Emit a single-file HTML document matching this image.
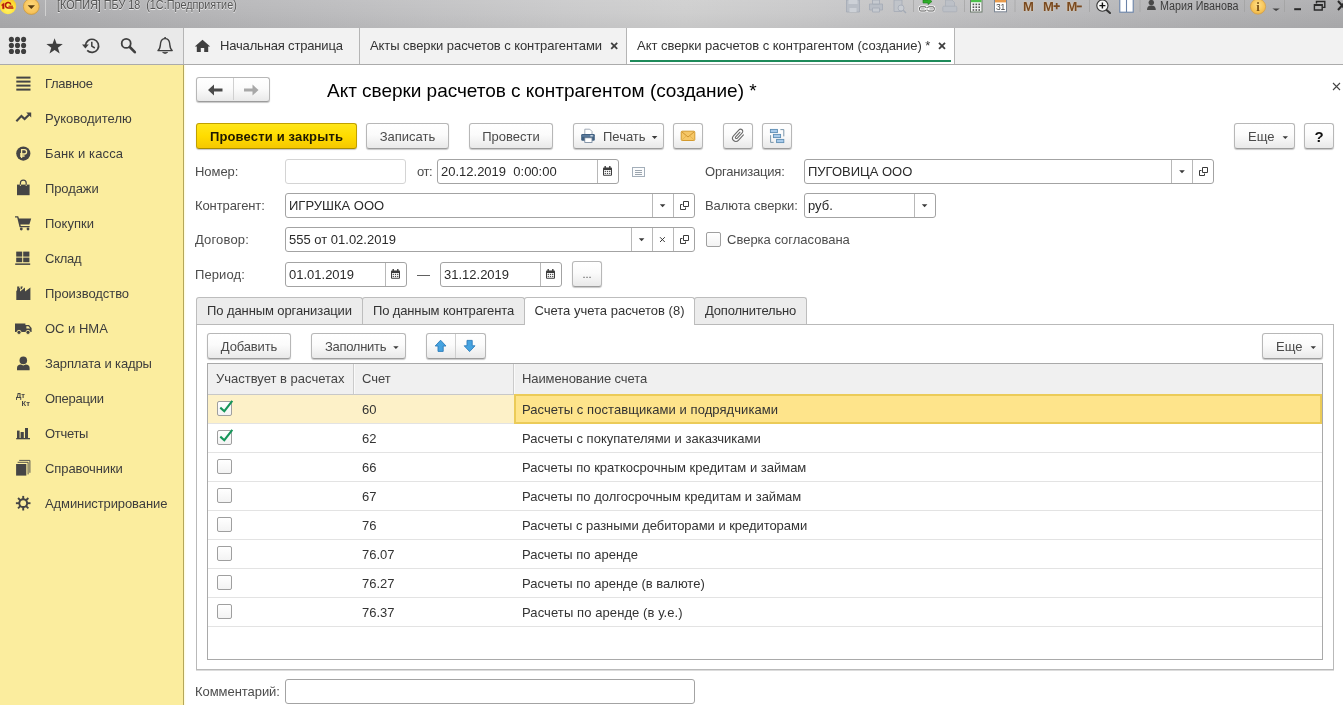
<!DOCTYPE html>
<html lang="ru">
<head>
<meta charset="utf-8">
<title>Акт сверки расчетов с контрагентом</title>
<style>
*{box-sizing:border-box;margin:0;padding:0}
html,body{width:1343px;height:705px;overflow:hidden;background:#fff}
body{font-family:"Liberation Sans",sans-serif;font-size:13px;color:#333;position:relative}
.abs{position:absolute}
#w{position:absolute;left:0;top:0;width:1343px;height:705px;overflow:hidden;will-change:transform;background:#fff}
#titlebar{position:absolute;left:0;top:0;width:1343px;height:28px;background:linear-gradient(rgba(255,255,255,.08) 0,rgba(255,255,255,.02) 45%,rgba(0,0,0,.02) 80%,rgba(0,0,0,.035) 100%),linear-gradient(90deg,#aaaaac 0,#b1b1b3 10%,#bbbbbd 25%,#c9c9ca 42%,#cecece 51%,#c8c8c9 60%,#bcbcbe 75%,#b1b1b3 90%,#acacae 100%)}
#titlebar .ttl{position:absolute;left:57px;top:-4.5px;font-size:12px;line-height:18px;color:#555;text-shadow:0 1px 0 rgba(255,255,255,.65),0 0 2px rgba(255,255,255,.6);white-space:nowrap;transform:scaleX(.899);transform-origin:0 0}
#titlebar .usr{position:absolute;left:1160px;top:-3px;font-size:12px;line-height:18px;color:#3c3c3c;white-space:nowrap;transform:scaleX(.895);transform-origin:0 0}
#toolbar{position:absolute;left:0;top:28px;width:1343px;height:37px;background:#f2f2f2;border-bottom:1px solid #ababab}
#toolbar .left{position:absolute;left:0;top:0;width:183px;height:36px;background:#e9e9e9}
#toolbar .vsep{position:absolute;top:0;width:1px;height:36px;background:#b5b5b5}
.tab{position:absolute;top:0;height:36px;font-size:13px;line-height:36px;color:#333;white-space:nowrap}
#sidebar{position:absolute;left:0;top:65px;width:183px;height:640px;background:#fbed9e}
#sidebar .it{position:absolute;left:45px;font-size:13px;line-height:20px;color:#3d3d3d;white-space:nowrap;letter-spacing:-0.18px}
#sideline{position:absolute;left:183px;top:65px;width:1px;height:640px;background:#b5a75a}
#sideline2{position:absolute;left:184px;top:65px;width:2px;height:640px;background:linear-gradient(90deg,#fffbd8,#fff)}
.btn{position:absolute;height:26px;border:1px solid #b7b7b7;border-bottom-color:#9c9c9c;border-radius:3px;background:linear-gradient(#fff 0,#fbfbfb 45%,#e9e9e9 100%);box-shadow:0 1px 1px rgba(0,0,0,.22);font-size:13px;line-height:25px;color:#4a4a4a;text-align:center;white-space:nowrap}
.btn.y{background:linear-gradient(#ffe61a 0,#ffdc00 50%,#f5c800 100%);border-color:#c0a000;border-bottom-color:#a88c00;color:#1f1a00;font-weight:bold;letter-spacing:0.16px}
.lbl{position:absolute;font-size:13px;line-height:20px;color:#4c4c4c;white-space:nowrap}
.inp{position:absolute;height:25px;border:1px solid #a3a3a3;border-radius:3px;background:#fff;font-size:13px;line-height:24px;color:#2a2a2a;padding-left:3px;white-space:nowrap;overflow:hidden}
.inp .sec{position:absolute;top:0;height:23px;border-left:1px solid #b8b8b8}
.ftab{position:absolute;top:297px;height:27px;border:1px solid #bdbdbd;border-bottom:none;border-radius:3px 3px 0 0;background:#ececec;font-size:13px;line-height:26px;color:#333;text-align:center;white-space:nowrap}
.ftab.act{background:#fff;height:28px}
.row{position:absolute;left:208px;width:1114px;height:29px;border-bottom:1px solid #e3e3e3}
.cell{position:absolute;top:0;font-size:13px;line-height:30px;color:#333;white-space:nowrap}
.cb{position:absolute;width:15px;height:15px;border:1px solid #9f9f9f;border-radius:2px;background:linear-gradient(#fff,#f3f3f3)}
</style>
</head>
<body>
<div id="w">

<!-- TITLE BAR -->
<div id="titlebar">
  <svg class="abs" style="left:0;top:0" width="1343" height="28" viewBox="0 0 1343 28">
    <defs>
      <radialGradient id="g1c" cx="50%" cy="70%" r="70%"><stop offset="0" stop-color="#fff36a"/><stop offset="0.6" stop-color="#ffe23a"/><stop offset="1" stop-color="#f2c028"/></radialGradient>
      <radialGradient id="gdd" cx="50%" cy="40%" r="70%"><stop offset="0" stop-color="#ffd97a"/><stop offset="0.7" stop-color="#f7c35a"/><stop offset="1" stop-color="#d9a23a"/></radialGradient>
      <radialGradient id="ginf" cx="50%" cy="40%" r="70%"><stop offset="0" stop-color="#ffe08a"/><stop offset="0.7" stop-color="#f5c050"/><stop offset="1" stop-color="#d8a040"/></radialGradient>
    </defs>
    <!-- 1C logo -->
    <circle cx="8" cy="6" r="8.2" fill="url(#g1c)"/>
    <path d="M1.8 4.5 L4.1 2.9 V8.8 H2.5 V5.5 L1.8 5.9 Z" fill="#b81a0c" stroke="#b81a0c" stroke-width="0.4"/>
    <path d="M10.9 4.6 A2.75 2.75 0 1 0 8.3 8 H13.4" fill="none" stroke="#b81a0c" stroke-width="1.5"/>
    <path d="M8.5 6.2 H12.9" fill="none" stroke="#b81a0c" stroke-width="1.1"/>
    <!-- dropdown -->
    <circle cx="31.3" cy="6.6" r="7.9" fill="url(#gdd)" stroke="#c99a45" stroke-width="0.8"/>
    <path d="M27.6 5.2 H35 L31.3 9 Z" fill="#5a3c10"/>
    <path d="M45.5 0 V16" stroke="#d0d0d0" stroke-width="1"/>
    <!-- disabled save/print/preview -->
    <g fill="#b9bec6" stroke="#a3aab5" stroke-width="0.8">
      <path d="M846.5 0 H859.5 V12 H846.5 Z"/>
      <path d="M869.5 4 H882.5 V10 H869.5 Z"/>
      <path d="M872.5 0 H879.5 V4 H872.5 Z M872.5 8 H879.5 V12 H872.5 Z" fill="#c6cad0"/>
      <path d="M894 0 H902 V11.5 H894 Z" fill="#c0c4ca"/>
      <circle cx="901" cy="8" r="3" fill="#c9cdd3"/>
      <path d="M903.2 10.2 L906 13" stroke-width="1.4"/>
    </g>
    <path d="M848.5 0 H857.5 V4 H848.5 Z M849.5 8 H856.5 V12 H849.5 Z" fill="#cdd1d7"/>
    <path d="M913.5 0 V12" stroke="#9d9d9d" stroke-width="1" opacity=".6"/>
    <!-- link icon -->
    <path d="M923 0 H928 V-2 L932 1.5 L928 4.6 V3 H923 Z" fill="#2fae2a" stroke="#1a7a18" stroke-width="0.6"/>
    <rect x="919.6" y="6.8" width="6.6" height="4.2" rx="1.2" fill="none" stroke="#fff" stroke-width="2.4"/>
    <rect x="927.6" y="6.8" width="6.6" height="4.2" rx="1.2" fill="none" stroke="#fff" stroke-width="2.4"/>
    <rect x="919.6" y="6.8" width="6.6" height="4.2" rx="1.2" fill="none" stroke="#555" stroke-width="1"/>
    <rect x="927.6" y="6.8" width="6.6" height="4.2" rx="1.2" fill="none" stroke="#555" stroke-width="1"/>
    <path d="M924.5 8.9 H929.5" stroke="#fff" stroke-width="1.4"/>
    <!-- disabled -->
    <g fill="#bcc0c7" stroke="#a9afb8" stroke-width="0.8">
      <path d="M945.5 0 H952 L954.5 2.5 V7 H945.5 Z"/>
      <rect x="942.8" y="6.2" width="14" height="5.6" rx="1"/>
    </g>
    <path d="M964.5 0 V12" stroke="#9d9d9d" stroke-width="1" opacity=".6"/>
    <!-- calculator -->
    <rect x="970.5" y="-1" width="11.5" height="13" fill="#f4f4f4" stroke="#6d7a6d" stroke-width="1"/>
    <rect x="971" y="-1" width="10.5" height="3.2" fill="#4cc04a"/>
    <g fill="#555"><rect x="972.6" y="3.6" width="1.6" height="1.6"/><rect x="975.5" y="3.6" width="1.6" height="1.6"/><rect x="978.4" y="3.6" width="1.6" height="1.6"/><rect x="972.6" y="6.4" width="1.6" height="1.6"/><rect x="975.5" y="6.4" width="1.6" height="1.6"/><rect x="978.4" y="6.4" width="1.6" height="1.6"/><rect x="972.6" y="9.2" width="1.6" height="1.6"/><rect x="975.5" y="9.2" width="1.6" height="1.6"/><rect x="978.4" y="9.2" width="1.6" height="1.6"/></g>
    <!-- calendar -->
    <rect x="994.5" y="-1" width="12" height="12.8" fill="#fff" stroke="#7c8794" stroke-width="1"/>
    <rect x="995" y="-1" width="11" height="3.4" fill="#e89a4a"/>
    <text x="1000.5" y="10.3" font-family="Liberation Sans" font-size="8.5" fill="#444" text-anchor="middle" letter-spacing="-0.3">31</text>
    <path d="M1015 0 V12" stroke="#9d9d9d" stroke-width="1" opacity=".6"/>
    <!-- M M+ M- -->
    <g font-family="Liberation Sans" font-weight="bold" font-size="13" fill="#7a4a20" style="text-shadow:0 0 2px #e6cfae">
      <text x="1023" y="10.6">M</text>
      <text x="1043" y="10.6">M</text>
      <text x="1066.4" y="10.6">M</text>
    </g>
    <path d="M1053.6 6.2 H1059.8 M1056.7 3.1 V9.3" stroke="#7a4a20" stroke-width="1.7"/>
    <path d="M1076.6 6.4 H1081.8" stroke="#7a4a20" stroke-width="1.8"/>
    <path d="M1089.5 0 V12" stroke="#9d9d9d" stroke-width="1" opacity=".6"/>
    <!-- zoom -->
    <path d="M1106 9.6 L1110 13" stroke="#333" stroke-width="2" stroke-linecap="round"/>
    <circle cx="1102.4" cy="5.6" r="5.6" fill="#f6f6f6" stroke="#333" stroke-width="1.1"/>
    <path d="M1099.4 5.6 H1105.4 M1102.4 2.6 V8.6" stroke="#111" stroke-width="1.4"/>
    <!-- panels -->
    <rect x="1119.8" y="-1" width="13.4" height="13.2" fill="#fff" stroke="#6a83a8" stroke-width="1.1"/>
    <path d="M1126.5 0 V12" stroke="#6a83a8" stroke-width="1.1"/>
    <path d="M1140 0 V12" stroke="#9d9d9d" stroke-width="1" opacity=".6"/>
    <!-- user -->
    <circle cx="1151.3" cy="2.6" r="2.7" fill="#4a4a4a"/>
    <path d="M1147 10 Q1147 5.6 1151.3 5.6 Q1155.8 5.6 1155.8 10 Z" fill="#4a4a4a"/>
    <path d="M1244.5 0 V12" stroke="#9d9d9d" stroke-width="1" opacity=".6"/>
    <!-- info -->
    <circle cx="1258" cy="6.6" r="7.6" fill="url(#ginf)" stroke="#d0a050" stroke-width="0.8"/>
    <text x="1258" y="11" font-family="Liberation Serif" font-weight="bold" font-size="12.5" fill="#7a5216" text-anchor="middle">i</text>
    <path d="M1272.4 8.4 H1279.8 L1276.1 11 Z" fill="#444"/>
    <path d="M1284.5 0 V12" stroke="#9d9d9d" stroke-width="1" opacity=".6"/>
    <!-- window buttons -->
    <path d="M1294.2 9.2 H1301" stroke="#2a2a2a" stroke-width="2"/>
    <path d="M1316.5 3.6 V1.5 H1324.8 V7.4 H1322.5" stroke="#2a2a2a" stroke-width="1.4" fill="none"/>
    <path d="M1314.4 4.6 H1322.2 V10 H1314.4 Z" stroke="#2a2a2a" stroke-width="1.4" fill="none"/>
    <path d="M1314.4 5 H1322.2" stroke="#2a2a2a" stroke-width="2"/>
    <path d="M1338 1 L1346 10 M1346 1 L1338 10" stroke="#2a2a2a" stroke-width="2"/>
  </svg>
  <div class="ttl">[КОПИЯ] ПБУ 18&nbsp; (1С:Предприятие)</div>
  <div class="usr">Мария Иванова</div>
</div>

<!-- TOOLBAR / TABS -->
<div id="toolbar">
  <div class="left"></div>
  <div class="abs" style="left:627px;top:0;width:327px;height:36px;background:#fff"></div>
  <div class="abs" style="left:630px;top:32px;width:321px;height:2px;background:#1e8a5a"></div>
  <div class="vsep" style="left:183px"></div>
  <div class="tab" style="left:220px;letter-spacing:-0.17px">Начальная страница</div>
  <div class="vsep" style="left:359px"></div>
  <div class="tab" style="left:370px;letter-spacing:-0.07px">Акты сверки расчетов с контрагентами</div>
  <div class="vsep" style="left:626px"></div>
  <div class="tab" style="left:637px;letter-spacing:-0.03px">Акт сверки расчетов с контрагентом (создание) *</div>
  <div class="vsep" style="left:954px"></div>
  <svg class="abs" style="left:0;top:0" width="1343" height="36" viewBox="0 28 1343 36">
    <!-- grid 3x3 -->
    <g fill="#3f3f3f">
      <circle cx="11.4" cy="39.4" r="2.55"/><circle cx="17.5" cy="39.4" r="2.55"/><circle cx="23.6" cy="39.4" r="2.55"/>
      <circle cx="11.4" cy="45.4" r="2.55"/><circle cx="17.5" cy="45.4" r="2.55"/><circle cx="23.6" cy="45.4" r="2.55"/>
      <circle cx="11.4" cy="51.4" r="2.55"/><circle cx="17.5" cy="51.4" r="2.55"/><circle cx="23.6" cy="51.4" r="2.55"/>
    </g>
    <!-- star -->
    <path d="M54.6 38.2 L56.6 43.8 L62.8 44 L57.9 47.7 L59.7 53.6 L54.6 50.1 L49.5 53.6 L51.3 47.7 L46.4 44 L52.6 43.8 Z" fill="#3f3f3f"/>
    <!-- history -->
    <path d="M85.4 45.6 A6.6 6.6 0 1 1 87.2 50.4" fill="none" stroke="#3f3f3f" stroke-width="1.7"/>
    <path d="M82 44.6 H88.8 L85.4 48.4 Z" fill="#3f3f3f"/>
    <path d="M91.8 41.8 V46.2 L94.8 48" fill="none" stroke="#3f3f3f" stroke-width="1.5"/>
    <!-- search -->
    <circle cx="126.2" cy="43.4" r="4.5" fill="none" stroke="#3f3f3f" stroke-width="1.8"/>
    <path d="M129.8 47 L134.8 52.2" stroke="#3f3f3f" stroke-width="2.6" stroke-linecap="round"/>
    <!-- bell -->
    <path d="M158 50.6 H172.2 C169.6 48.6 170 45.4 169.6 43 C169.2 40.4 167.4 38.6 165.1 38.6 C162.8 38.6 161 40.4 160.6 43 C160.2 45.4 160.6 48.6 158 50.6 Z" fill="none" stroke="#3f3f3f" stroke-width="1.4" stroke-linejoin="round"/>
    <path d="M165.1 37 V38.6" stroke="#3f3f3f" stroke-width="1.6"/>
    <path d="M162.6 52.4 H167.6 Q165.1 54.6 162.6 52.4 Z" fill="#3f3f3f" stroke="#3f3f3f" stroke-width="0.8"/>
    <!-- home -->
    <path d="M202.5 39.8 L210.2 46.6 H208.2 V52 H204.2 V48 H200.8 V52 H196.8 V46.6 H194.8 Z" fill="#3f3f3f"/>
    <!-- tab close x -->
    <path d="M611.2 42.8 L617.2 48.8 M617.2 42.8 L611.2 48.8" stroke="#3f3f3f" stroke-width="1.8"/>
    <path d="M939 42.8 L945 48.8 M945 42.8 L939 48.8" stroke="#3f3f3f" stroke-width="1.8"/>
  </svg>
</div>

<!-- SIDEBAR -->
<div id="sidebar">
  <svg class="abs" style="left:0;top:0" width="183" height="640" viewBox="0 65 183 640">
    <g fill="#454545" stroke="none">
      <!-- menu -->
      <rect x="16.3" y="76.6" width="14.2" height="2"/><rect x="16.3" y="80.6" width="14.2" height="2"/><rect x="16.3" y="84.6" width="14.2" height="2"/><rect x="16.3" y="88.6" width="14.2" height="2"/>
      <!-- trend -->
      <path d="M15.6 120.6 L21.4 114.6 L24.6 117.6 L28 114.3 L26.2 112.6 H31.2 V117.6 L29.5 115.8 L24.6 120.6 L21.4 117.6 L17.1 122.1 Z"/>
      <!-- ruble -->
      <circle cx="23.3" cy="153.6" r="7.1"/>
      <!-- bag -->
      <path d="M17 184.6 H29.6 V195.2 H17 Z"/>
      <!-- cart -->
      <path d="M15 216.2 H18.2 L19 218.6 H31.2 L29.4 224.6 H20.4 L20.8 226 H29.6 V227.2 H19.6 L17.2 217.6 H15 Z"/>
      <circle cx="21.3" cy="229" r="1.4"/><circle cx="28" cy="229" r="1.4"/>
      <!-- sklad -->
      <rect x="16.2" y="251.6" width="6" height="5"/><rect x="23.2" y="251.6" width="6.2" height="5"/>
      <rect x="16.2" y="257.6" width="6" height="4.6"/><rect x="23.2" y="257.6" width="6.2" height="4.6"/>
      <rect x="15.2" y="263.4" width="15" height="1.5"/>
      <!-- factory -->
      <path d="M16.3 300 V291 L20 287.6 V291.6 L25 287.6 V291.6 L30.4 287.6 V300 Z"/>
      <path d="M17.2 286.4 H19.4 L18.6 290 L17.2 291.2 Z"/><path d="M20.6 286.4 H22.8 L22 288.6 L20.6 289.8 Z"/>
      <!-- truck -->
      <path d="M15 323.4 H25.4 V325 H29 L31.6 328 V332 H15 Z"/>
      <circle cx="19" cy="332.4" r="2.1" stroke="#fbed9e" stroke-width="0.9"/><circle cx="28" cy="332.4" r="2.1" stroke="#fbed9e" stroke-width="0.9"/>
      <!-- person -->
      <circle cx="23.3" cy="360.4" r="3.8"/>
      <path d="M17 370.2 V368 Q17 364.6 21 364.4 L23.3 365.6 L25.6 364.4 Q29.6 364.6 29.6 368 V370.2 Z"/>
      <!-- reports -->
      <rect x="17" y="430.6" width="2.6" height="7.6"/><rect x="20.6" y="432" width="3.2" height="6.2"/><rect x="25" y="428" width="3" height="10.2"/>
      <rect x="16.2" y="438" width="13.8" height="1.3"/>
      <!-- catalogs -->
      <rect x="16.1" y="464" width="10.2" height="11.6"/>
    </g>
    <path d="M27.6 111.6 l0 0" />
    <!-- ruble glyph -->
    <path d="M21.6 158 V149.6 H24.4 A2.2 2.2 0 0 1 24.4 154 H20 M20 156 H24.6" fill="none" stroke="#fbed9e" stroke-width="1.3"/>
    <!-- bag handle -->
    <path d="M20.4 186.4 V183 A2.9 2.9 0 0 1 26.2 183 V186.4" fill="none" stroke="#454545" stroke-width="1.2"/>
    <path d="M20.4 186 V184.6 M26.2 186 V184.6" stroke="#fbed9e" stroke-width="0.9"/>
    <!-- truck window -->
    <path d="M26.4 326.2 H28.4 L30.2 328.4 H26.4 Z" fill="#fbed9e"/>
    <!-- DtKt -->
    <text x="16" y="398.4" font-family="Liberation Sans" font-weight="bold" font-size="7.5" fill="#454545">Дт</text>
    <text x="21.6" y="405.8" font-family="Liberation Sans" font-weight="bold" font-size="7.5" fill="#454545">Кт</text>
    <!-- catalogs back pages -->
    <path d="M17.6 462.3 H28.1 V474.4 M19.2 460.4 H29.9 V472.8" fill="none" stroke="#454545" stroke-width="0.9"/>
    <!-- gear -->
    <g transform="translate(23.2 503.2)">
      <g fill="#454545">
        <rect x="-0.95" y="-7.3" width="1.9" height="14.6"/>
        <rect x="-0.95" y="-7.3" width="1.9" height="14.6" transform="rotate(45)"/>
        <rect x="-0.95" y="-7.3" width="1.9" height="14.6" transform="rotate(90)"/>
        <rect x="-0.95" y="-7.3" width="1.9" height="14.6" transform="rotate(135)"/>
        <circle r="4.9"/>
      </g>
      <circle r="2.9" fill="#fbed9e"/>
    </g>
  </svg>
  <div class="it" style="top:9px;letter-spacing:-0.27px">Главное</div>
  <div class="it" style="top:44px;letter-spacing:0px">Руководителю</div>
  <div class="it" style="top:79px;letter-spacing:0.14px">Банк и касса</div>
  <div class="it" style="top:114px;letter-spacing:-0.1px">Продажи</div>
  <div class="it" style="top:149px;letter-spacing:0px">Покупки</div>
  <div class="it" style="top:184px;letter-spacing:-0.24px">Склад</div>
  <div class="it" style="top:219px;letter-spacing:-0.06px">Производство</div>
  <div class="it" style="top:254px;letter-spacing:0px">ОС и НМА</div>
  <div class="it" style="top:289px;letter-spacing:-0.12px">Зарплата и кадры</div>
  <div class="it" style="top:324px;letter-spacing:-0.27px">Операции</div>
  <div class="it" style="top:359px;letter-spacing:-0.3px">Отчеты</div>
  <div class="it" style="top:394px;letter-spacing:-0.09px">Справочники</div>
  <div class="it" style="top:429px;letter-spacing:-0.1px">Администрирование</div>
</div>
<div id="sideline"></div>
<div id="sideline2"></div>

<!-- MAIN -->
<div id="main">
<!-- form header -->
<div class="btn" style="left:196px;top:77px;width:74px;height:25px"></div>
<div class="abs" style="left:233px;top:78px;width:1px;height:22px;background:#d0d0d0"></div>
<svg class="abs" style="left:208px;top:84px" width="15" height="12" viewBox="0 0 15 12"><path d="M0 6 L6 0.5 V4.5 H14.5 V7.5 H6 V11.5 Z" fill="#4a4a4a"/></svg>
<svg class="abs" style="left:244px;top:84px" width="15" height="12" viewBox="0 0 15 12"><path d="M14.5 6 L8.5 0.5 V4.5 H0 V7.5 H8.5 V11.5 Z" fill="#a8a8a8"/></svg>
<div class="abs" id="ftitle" style="left:327px;top:79px;font-size:19px;line-height:24px;color:#000;letter-spacing:-0.025px;white-space:nowrap">Акт сверки расчетов с контрагентом (создание) *</div>
<svg class="abs" style="left:1332px;top:82px" width="9" height="9" viewBox="0 0 9 9"><path d="M1 1 L8 8 M8 1 L1 8" stroke="#444" stroke-width="1.1" fill="none"/></svg>

<!-- command bar -->
<div class="btn y" style="left:196px;top:123px;width:161px">Провести и закрыть</div>
<div class="btn" style="left:366px;top:123px;width:83px">Записать</div>
<div class="btn" style="left:469px;top:123px;width:84px">Провести</div>
<div class="btn" style="left:573px;top:123px;width:91px"><span class="abs" style="left:29px;top:0">Печать</span></div>
<div class="btn" style="left:673px;top:123px;width:30px"></div>
<div class="btn" style="left:723px;top:123px;width:30px"></div>
<div class="btn" style="left:762px;top:123px;width:30px"></div>
<div class="btn" style="left:1234px;top:123px;width:61px"><span class="abs" style="left:13px;top:0">Еще</span></div>
<div class="btn" style="left:1304px;top:123px;width:30px;font-weight:bold;color:#111;font-size:15px">?</div>

<!-- fields -->
<div class="lbl" style="left:195px;top:162px;letter-spacing:-0.05px">Номер:</div>
<div class="inp" style="left:285px;top:159px;width:121px;border-color:#d4d4d4"></div>
<div class="lbl" style="left:417px;top:162px;letter-spacing:-0.5px">от:</div>
<div class="inp" style="left:437px;top:159px;width:182px">20.12.2019&nbsp; 0:00:00<div class="sec" style="left:159px;width:21px"></div></div>
<div class="lbl" style="left:705px;top:162px;letter-spacing:-0.2px">Организация:</div>
<div class="inp" style="left:804px;top:159px;width:410px">ПУГОВИЦА ООО<div class="sec" style="left:366px;width:21px"></div><div class="sec" style="left:387px;width:21px"></div></div>

<div class="lbl" style="left:195px;top:196px;letter-spacing:-0.1px">Контрагент:</div>
<div class="inp" style="left:285px;top:193px;width:410px">ИГРУШКА ООО<div class="sec" style="left:366px;width:21px"></div><div class="sec" style="left:387px;width:21px"></div></div>
<div class="lbl" style="left:705px;top:196px;letter-spacing:-0.08px">Валюта сверки:</div>
<div class="inp" style="left:804px;top:193px;width:132px">руб.<div class="sec" style="left:109px;width:21px"></div></div>

<div class="lbl" style="left:195px;top:230px;letter-spacing:0.15px">Договор:</div>
<div class="inp" style="left:285px;top:227px;width:410px">555 от 01.02.2019<div class="sec" style="left:345px;width:21px"></div><div class="sec" style="left:366px;width:21px"></div><div class="sec" style="left:387px;width:21px"></div></div>
<div class="cb" style="left:706px;top:232px"></div>
<div class="lbl" style="left:727px;top:230px">Сверка согласована</div>

<div class="lbl" style="left:195px;top:265px;letter-spacing:0.1px">Период:</div>
<div class="inp" style="left:285px;top:262px;width:122px">01.01.2019<div class="sec" style="left:99px;width:21px"></div></div>
<div class="lbl" style="left:417px;top:265px">—</div>
<div class="inp" style="left:440px;top:262px;width:122px">31.12.2019<div class="sec" style="left:99px;width:21px"></div></div>
<div class="btn" style="left:572px;top:261px;width:30px;line-height:24px;font-size:11px;color:#555">...</div>

<!-- form tabs -->
<div class="abs" style="left:196px;top:324px;width:1138px;height:346px;border:1px solid #b9b9b9;box-shadow:0 1px 0 #dcdcdc"></div>
<div class="ftab" style="left:196px;width:167px;letter-spacing:-0.1px">По данным организации</div>
<div class="ftab" style="left:362px;width:163px;letter-spacing:-0.13px">По данным контрагента</div>
<div class="ftab act" style="left:524px;width:171px">Счета учета расчетов (8)</div>
<div class="ftab" style="left:694px;width:113px;letter-spacing:-0.2px">Дополнительно</div>

<!-- table command bar -->
<div class="btn" style="left:207px;top:333px;width:84px;letter-spacing:-0.15px">Добавить</div>
<div class="btn" style="left:311px;top:333px;width:95px"><span class="abs" style="left:13px;top:0;letter-spacing:-0.3px">Заполнить</span></div>
<div class="btn" style="left:426px;top:333px;width:60px"></div>
<div class="abs" style="left:455px;top:334px;width:1px;height:24px;background:#cfcfcf"></div>
<div class="btn" style="left:1262px;top:333px;width:61px"><span class="abs" style="left:13px;top:0">Еще</span></div>

<!-- table -->
<div class="abs" style="left:207px;top:363px;width:1116px;height:297px;border:1px solid #a9a9a9"></div>
<div class="abs" id="thead" style="left:208px;top:364px;width:1114px;height:31px;background:#f0f0f0;border-bottom:1px solid #c8c8c8"></div>
<div class="abs" style="left:353px;top:364px;width:2px;height:30px;background:linear-gradient(90deg,#cbcbcb 50%,#fafafa 50%)"></div><div class="abs" style="left:353px;top:395px;width:1px;height:28px;background:#fff9e6"></div>
<div class="abs" style="left:513px;top:364px;width:2px;height:30px;background:linear-gradient(90deg,#cbcbcb 50%,#fafafa 50%)"></div>
<div class="cell" style="left:216px;top:364px;color:#444">Участвует в расчетах</div>
<div class="cell" style="left:362px;top:364px;color:#444">Счет</div>
<div class="cell" style="left:522px;top:364px;color:#444;letter-spacing:-0.09px">Наименование счета</div>
<div class="row" style="top:395px"><div class="abs" style="left:0;top:0;width:306px;height:28px;background:#fdf1c8"></div><div class="abs" style="left:306px;top:-1px;width:808px;height:30px;background:#fee48b;border:2px solid #ebcb58"></div><div class="cb" style="left:9px;top:6px"></div><div class="cell" style="left:154px">60</div><div class="cell" style="left:314px;letter-spacing:0.065px">Расчеты с поставщиками и подрядчиками</div></div>
<div class="row" style="top:424px"><div class="cb" style="left:9px;top:6px"></div><div class="cell" style="left:154px">62</div><div class="cell" style="left:314px;letter-spacing:0.02px">Расчеты с покупателями и заказчиками</div></div>
<div class="row" style="top:453px"><div class="cb" style="left:9px;top:6px"></div><div class="cell" style="left:154px">66</div><div class="cell" style="left:314px">Расчеты по краткосрочным кредитам и займам</div></div>
<div class="row" style="top:482px"><div class="cb" style="left:9px;top:6px"></div><div class="cell" style="left:154px">67</div><div class="cell" style="left:314px">Расчеты по долгосрочным кредитам и займам</div></div>
<div class="row" style="top:511px"><div class="cb" style="left:9px;top:6px"></div><div class="cell" style="left:154px">76</div><div class="cell" style="left:314px;letter-spacing:-0.045px">Расчеты с разными дебиторами и кредиторами</div></div>
<div class="row" style="top:540px"><div class="cb" style="left:9px;top:6px"></div><div class="cell" style="left:154px">76.07</div><div class="cell" style="left:314px">Расчеты по аренде</div></div>
<div class="row" style="top:569px"><div class="cb" style="left:9px;top:6px"></div><div class="cell" style="left:154px">76.27</div><div class="cell" style="left:314px">Расчеты по аренде (в валюте)</div></div>
<div class="row" style="top:598px"><div class="cb" style="left:9px;top:6px"></div><div class="cell" style="left:154px">76.37</div><div class="cell" style="left:314px;letter-spacing:0.09px">Расчеты по аренде (в у.е.)</div></div>
<svg class="abs" style="left:0;top:0;pointer-events:none" width="1343" height="705" viewBox="0 0 1343 705">
<path d="M584.8 129.2 H589.8 L592 131.4 V135 H584.8 Z" fill="#fff" stroke="#8a97a6" stroke-width="0.8"/>
<rect x="581.2" y="134" width="13.6" height="6.8" rx="1.2" fill="#3f5f80"/>
<rect x="582.2" y="135.4" width="11.6" height="1.1" fill="#6f8fb0"/>
<rect x="590.4" y="135.2" width="2.4" height="1.2" fill="#dfe8f0"/>
<rect x="584.8" y="137.8" width="7.2" height="4.6" fill="#fff" stroke="#6b7f96" stroke-width="0.8"/>
<path d="M651.8 135.9 H657.4 L654.5999999999999 138.9 Z" fill="#3a3a3a"/>
<rect x="681.2" y="131.2" width="13.6" height="9.3" rx="1" fill="#f6c766" stroke="#d39a2e" stroke-width="1"/>
<path d="M681.8 131.8 L688 137 L694.2 131.8" fill="none" stroke="#c98e28" stroke-width="0.9"/>
<path d="M681.8 140 L686.4 135.8 M694.2 140 L689.6 135.8" fill="none" stroke="#e0ae48" stroke-width="0.7"/>
<g transform="translate(738 135.4) rotate(43)"><path d="M-1.2 -4.4 V3.2 A1.2 1.2 0 0 0 1.2 3.2 V-5.6 A2.6 2.6 0 0 0 -4 -5.6 V4 A4 4 0 0 0 4 4 V-4.8" transform="translate(0.3 0) scale(0.84)" fill="none" stroke="#6a6a6a" stroke-width="1.3" stroke-linecap="round"/></g>
<rect x="770.4" y="129.4" width="7" height="3.2" fill="#a9cbea" stroke="#5d8db4" stroke-width="0.9"/>
<rect x="773.4" y="134.4" width="7.2" height="3.2" fill="#a9cbea" stroke="#5d8db4" stroke-width="0.9"/>
<rect x="776.6" y="139.4" width="7.2" height="3.2" fill="#a9cbea" stroke="#5d8db4" stroke-width="0.9"/>
<path d="M780.4 129.6 H783.8 V136.4 M770.6 135.2 V142.4 H773.6" fill="none" stroke="#6c8ba3" stroke-width="0.9"/>
<path d="M1282.6 136.2 H1288.0 L1285.3 139.0 Z" fill="#3a3a3a"/>
<path d="M1310.6 346.2 H1316.0 L1313.3 349.0 Z" fill="#3a3a3a"/>
<path d="M393.2 346.2 H398.59999999999997 L395.9 349.0 Z" fill="#3a3a3a"/>
<rect x="603" y="167.5" width="9" height="8.2" rx="0.9" fill="#3d3d3d"/><rect x="604.5" y="166" width="1.4" height="2.6" fill="#3d3d3d"/><rect x="609.1" y="166" width="1.4" height="2.6" fill="#3d3d3d"/><rect x="604" y="170" width="7" height="4.8" fill="#fdfdfd"/><rect x="604.7" y="170.8" width="1.2" height="1.2" fill="#4a4a4a"/><rect x="604.7" y="172.9" width="1.2" height="1.2" fill="#4a4a4a"/><rect x="606.9000000000001" y="170.8" width="1.2" height="1.2" fill="#4a4a4a"/><rect x="606.9000000000001" y="172.9" width="1.2" height="1.2" fill="#4a4a4a"/><rect x="609.1" y="170.8" width="1.2" height="1.2" fill="#4a4a4a"/><rect x="609.1" y="172.9" width="1.2" height="1.2" fill="#4a4a4a"/>
<rect x="391" y="270.5" width="9" height="8.2" rx="0.9" fill="#3d3d3d"/><rect x="392.5" y="269" width="1.4" height="2.6" fill="#3d3d3d"/><rect x="397.1" y="269" width="1.4" height="2.6" fill="#3d3d3d"/><rect x="392" y="273" width="7" height="4.8" fill="#fdfdfd"/><rect x="392.7" y="273.8" width="1.2" height="1.2" fill="#4a4a4a"/><rect x="392.7" y="275.90000000000003" width="1.2" height="1.2" fill="#4a4a4a"/><rect x="394.9" y="273.8" width="1.2" height="1.2" fill="#4a4a4a"/><rect x="394.9" y="275.90000000000003" width="1.2" height="1.2" fill="#4a4a4a"/><rect x="397.09999999999997" y="273.8" width="1.2" height="1.2" fill="#4a4a4a"/><rect x="397.09999999999997" y="275.90000000000003" width="1.2" height="1.2" fill="#4a4a4a"/>
<rect x="546" y="270.5" width="9" height="8.2" rx="0.9" fill="#3d3d3d"/><rect x="547.5" y="269" width="1.4" height="2.6" fill="#3d3d3d"/><rect x="552.1" y="269" width="1.4" height="2.6" fill="#3d3d3d"/><rect x="547" y="273" width="7" height="4.8" fill="#fdfdfd"/><rect x="547.7" y="273.8" width="1.2" height="1.2" fill="#4a4a4a"/><rect x="547.7" y="275.90000000000003" width="1.2" height="1.2" fill="#4a4a4a"/><rect x="549.9000000000001" y="273.8" width="1.2" height="1.2" fill="#4a4a4a"/><rect x="549.9000000000001" y="275.90000000000003" width="1.2" height="1.2" fill="#4a4a4a"/><rect x="552.1" y="273.8" width="1.2" height="1.2" fill="#4a4a4a"/><rect x="552.1" y="275.90000000000003" width="1.2" height="1.2" fill="#4a4a4a"/>
<rect x="632.5" y="167.5" width="12" height="9" fill="#fbfcfd" stroke="#a3aeb9" stroke-width="1"/>
<path d="M635 170.5 H642 M635 172.5 H642 M635 174.5 H642" stroke="#9ca5ae" stroke-width="1"/>
<path d="M1179.2 170.2 H1184.8 L1182.0 173.2 Z" fill="#3a3a3a"/>
<path d="M1202.5 167.5 H1207.5 V172.5 H1202.5 Z" fill="none" stroke="#3a3a3a" stroke-width="1"/><path d="M1201.5 170.5 H1199.5 V175.5 H1204.5 V173.5" fill="none" stroke="#3a3a3a" stroke-width="1"/>
<path d="M659.8 204.2 H665.4 L662.5999999999999 207.2 Z" fill="#3a3a3a"/>
<path d="M683.5 201.5 H688.5 V206.5 H683.5 Z" fill="none" stroke="#3a3a3a" stroke-width="1"/><path d="M682.5 204.5 H680.5 V209.5 H685.5 V207.5" fill="none" stroke="#3a3a3a" stroke-width="1"/>
<path d="M921.8 204.2 H927.4 L924.5999999999999 207.2 Z" fill="#3a3a3a"/>
<path d="M638.8 238.2 H644.4 L641.5999999999999 241.2 Z" fill="#3a3a3a"/>
<path d="M660 237.2 L664.8 242 M664.8 237.2 L660 242" stroke="#3a3a3a" stroke-width="1" fill="none"/>
<path d="M683.5 235.5 H688.5 V240.5 H683.5 Z" fill="none" stroke="#3a3a3a" stroke-width="1"/><path d="M682.5 238.5 H680.5 V243.5 H685.5 V241.5" fill="none" stroke="#3a3a3a" stroke-width="1"/>
<path d="M440.6 340.2 L446 346 H443.2 V351.4 H438 V346 H435.2 Z" fill="#45a3e0" stroke="#2c7cba" stroke-width="0.9" stroke-linejoin="round"/>
<path d="M469.6 351.6 L475 345.8 H472.2 V340.4 H467 V345.8 H464.2 Z" fill="#45a3e0" stroke="#2c7cba" stroke-width="0.9" stroke-linejoin="round"/>
<path d="M220.3 407.6 L224.3 411.2 L232.3 400.8" fill="none" stroke="#17965a" stroke-width="2.1" stroke-linejoin="miter" stroke-linecap="butt"/>
<path d="M220.3 436.6 L224.3 440.2 L232.3 429.8" fill="none" stroke="#17965a" stroke-width="2.1" stroke-linejoin="miter" stroke-linecap="butt"/>
</svg>
<!-- comment -->
<div class="lbl" style="left:195px;top:682px;letter-spacing:-0.05px">Комментарий:</div>
<div class="inp" style="left:285px;top:679px;width:410px"></div>
</div>

</div>
</body>
</html>
